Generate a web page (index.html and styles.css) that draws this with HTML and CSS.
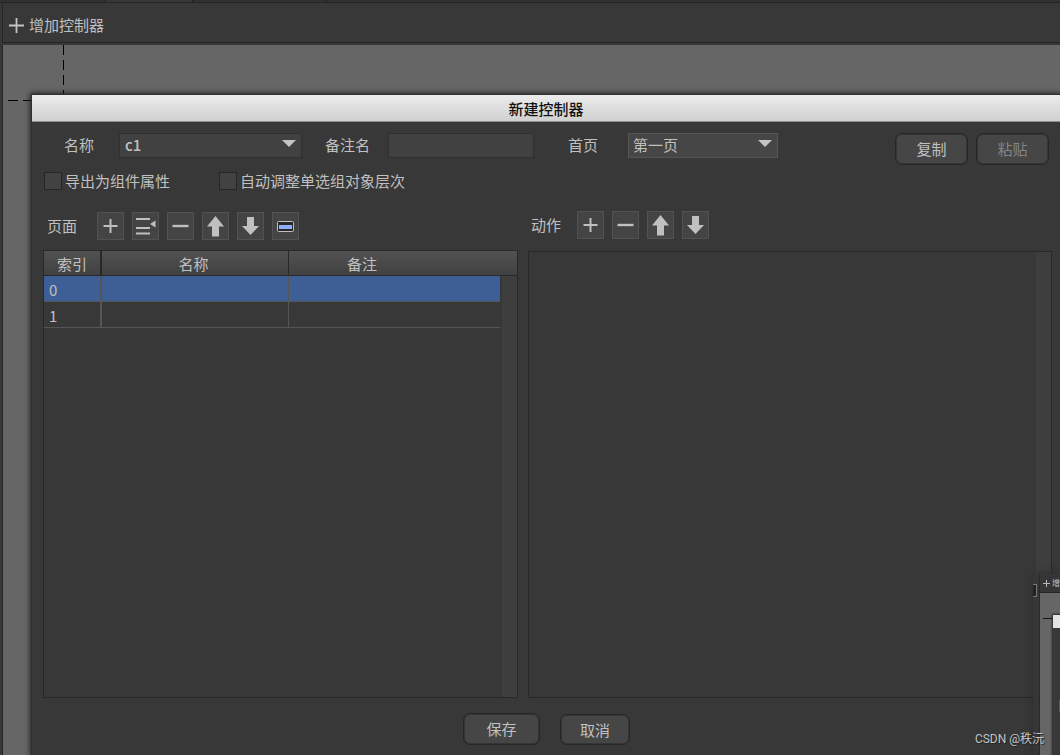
FILE: index.html
```html
<!DOCTYPE html>
<html lang="zh-CN">
<head>
<meta charset="utf-8">
<title>新建控制器</title>
<link rel="stylesheet" href="styles.css">
</head>
<body>
<div class="app">
  <div class="tabs"><span class="tab"></span><span class="tab tab-active"></span><span class="tab tab-wide"></span></div>
  <header class="toolbar">
    <button class="add-controller" type="button">
      <svg width="15" height="15" viewBox="0 0 15 15"><path d="M0 7.5h15M7.5 0v15" stroke="#c4c4c4" stroke-width="1.8"/></svg>
      <span>增加控制器</span>
    </button>
  </header>
  <main class="canvas">
    <svg class="guides" width="80" height="80" viewBox="0 0 80 80"><path d="M60.5 0v80" stroke="#000" stroke-dasharray="10 5"/><path d="M5 55.5h75" stroke="#000" stroke-dasharray="10 5"/></svg>
    <section class="dialog" role="dialog" aria-labelledby="dialog-title">
      <h1 class="title" id="dialog-title">新建控制器</h1>
      <form class="content">
        <div class="fields">
          <label class="label label-name" for="name">名称</label>
          <span class="picker picker-name"><select id="name"><option>c1</option></select></span>
          <label class="label label-note" for="note">备注名</label>
          <input class="note" id="note" type="text">
          <label class="label label-home" for="home">首页</label>
          <span class="picker picker-home"><select id="home"><option>第一页</option></select></span>
          <div class="clipboard">
            <button class="button" type="button">复制</button>
            <button class="button" type="button" disabled>粘贴</button>
          </div>
        </div>
        <div class="options">
          <label class="check"><input type="checkbox">导出为组件属性</label>
          <label class="check"><input type="checkbox">自动调整单选组对象层次</label>
        </div>
        <div class="columns">
          <section class="pages">
            <div class="tools">
              <h2 class="heading">页面</h2>
              <button class="tool" type="button" aria-label="添加页面"><svg viewBox="0 0 25 26"><path d="M5.500 13h14M12.500 6v14" stroke-width="2"/></svg></button>
              <button class="tool" type="button" aria-label="插入页面"><svg viewBox="0 0 25 26"><path d="M3 6h14M3 15h14M3 20.500h14" stroke-width="2"/><path class="solid" d="M17 11l5.500-3.500v7z"/></svg></button>
              <button class="tool" type="button" aria-label="删除页面"><svg viewBox="0 0 25 26"><path d="M4.500 13h16" stroke-width="2.400"/></svg></button>
              <button class="tool" type="button" aria-label="上移页面"><svg viewBox="0 0 25 26"><path class="solid" d="M12.500 3L21 13.500h-5V23.500H9V13.500H4z"/></svg></button>
              <button class="tool" type="button" aria-label="下移页面"><svg viewBox="0 0 25 26"><path class="solid" d="M9 4h7v9h5l-8.500 9L4 13h5z"/></svg></button>
              <button class="tool" type="button" aria-label="重置"><svg viewBox="0 0 25 26"><rect x="4.500" y="8.500" width="16" height="10" rx="1" fill="#282828"/><rect class="bar" x="6" y="12" width="13" height="4"/></svg></button>
            </div>
            <div class="pane">
              <table class="grid">
                <colgroup><col class="col-index"><col class="col-name"><col class="col-note"><col class="col-scroll"></colgroup>
                <thead><tr><th>索引</th><th class="name-head">名称</th><th class="note-head">备注</th><th class="plain"></th></tr></thead>
                <tbody>
                  <tr class="selected"><td>0</td><td></td><td></td><td class="plain"></td></tr>
                  <tr><td>1</td><td></td><td></td><td class="plain"></td></tr>
                </tbody>
              </table>
              <div class="remainder"></div>
            </div>
          </section>
          <section class="actions">
            <div class="tools">
              <h2 class="heading">动作</h2>
              <button class="tool" type="button" aria-label="添加动作"><svg viewBox="0 0 25 26"><path d="M5.500 13h14M12.500 6v14" stroke-width="2"/></svg></button>
              <button class="tool" type="button" aria-label="删除动作"><svg viewBox="0 0 25 26"><path d="M4.500 13h16" stroke-width="2.400"/></svg></button>
              <button class="tool" type="button" aria-label="上移动作"><svg viewBox="0 0 25 26"><path class="solid" d="M12.500 3L21 13.500h-5V23.500H9V13.500H4z"/></svg></button>
              <button class="tool" type="button" aria-label="下移动作"><svg viewBox="0 0 25 26"><path class="solid" d="M9 4h7v9h5l-8.500 9L4 13h5z"/></svg></button>
            </div>
            <div class="pane"><div class="remainder"></div></div>
          </section>
        </div>
        <footer class="footer">
          <button class="button save" type="button">保存</button>
          <button class="button cancel" type="button">取消</button>
        </footer>
      </form>
    </section>
  </main>
  <div class="preview">
    <div class="preview-edge"></div>
    <div class="preview-main">
      <div class="preview-bar"><svg width="7" height="7" viewBox="0 0 7 7"><path d="M0 3.500h7M3.500 0v7" stroke="#b8b8b8"/></svg><span>增加控制器</span></div>
      <div class="preview-canvas"><div class="preview-dialog"><div class="preview-title"></div><div class="preview-row"></div></div></div>
    </div>
  </div>
  <p class="credit">CSDN @秩沅</p>
</div>
</body>
</html>
```
FILE: styles.css
```css
* { box-sizing: border-box; }

body {
  margin: 0;
  background: #383838;
  color: #c0c0c0;
  font: 15px/22px "Noto Sans CJK SC", "Noto Sans", sans-serif;
}

button, input, select { font: inherit; color: inherit; margin: 0; }

.app {
  position: relative;
  display: flex;
  flex-direction: column;
  min-height: 100vh;
  overflow: hidden;
}

.tabs { display: flex; height: 3px; background: #303030; border-bottom: 1px solid #252525; }
.tab { width: 106px; border-right: 1px solid #222; }
.tab-active { width: 87px; background: #383838; }
.tab-wide { width: 134px; }

.toolbar {
  display: flex;
  align-items: center;
  height: 40px;
  margin-left: 2px;
  padding: 5px 6px 0;
  border-left: 1px solid #252525;
  border-bottom: 1px solid #252525;
}

.add-controller {
  display: flex;
  align-items: center;
  gap: 5px;
  padding: 0;
  border: 0;
  background: none;
}
.add-controller svg { display: block; }

.canvas {
  position: relative;
  display: flex;
  flex: 1;
  margin: 2px 0 0 2px;
  padding: 50px 0 0 29px;
  border-left: 1px solid #252525;
  background: #666;
}
.guides { position: absolute; top: 0; left: 0; }

.dialog {
  position: relative;
  display: flex;
  flex: 1;
  flex-direction: column;
  background: #383838;
  box-shadow: 0 0 0 1px #303030, 0 0 5px 2px #222;
}

.title {
  height: 27px;
  margin: 0;
  border-bottom: 1px solid #8d918f;
  background: linear-gradient(#ececec, #d0d0d0);
  color: #111;
  font-size: 15px;
  font-weight: 500;
  line-height: 27px;
  text-align: center;
}

.content {
  display: flex;
  flex: 1;
  flex-direction: column;
  padding: 11px 8px 10px 11px;
}

.fields { display: flex; align-items: flex-start; height: 32px; }
.label { line-height: 24px; }
.label-name { margin-left: 21px; }
.label-note { margin-left: 23px; }
.label-home { margin-left: 34px; }

.picker { position: relative; height: 25px; background: #414141; }
.picker::after {
  content: "";
  position: absolute;
  top: 7px;
  right: 6px;
  border: 7px solid transparent;
  border-top-color: #c4c4c4;
  border-bottom-width: 0;
  pointer-events: none;
}
.picker select {
  appearance: none;
  display: block;
  width: 100%;
  height: 100%;
  padding: 0 5px 2px;
  border: 1px solid #303030;
  border-radius: 0;
  background: none;
}
.picker-name { width: 183px; margin-left: 25px; }
.picker-name select { font-weight: 500; }
.picker-home { width: 150px; margin-left: 30px; background: #464646; }
.picker-home select { padding-left: 4px; border-color: #555; }

.note {
  width: 146px;
  height: 25px;
  margin-left: 18px;
  padding: 0 5px;
  border: 1px solid #303030;
  background: #414141;
}

.clipboard { display: flex; gap: 8px; margin: 0 3px 0 auto; }

.button {
  width: 73px;
  height: 32px;
  padding: 0;
  border: 1px solid #262626;
  border-radius: 7px;
  background: #464646;
  box-shadow: inset 0 0 0 1px #353535;
}
.button:disabled { color: #848484; }

.options { display: flex; gap: 49px; padding: 6px 1px 0; }
.check { display: flex; align-items: center; gap: 3px; line-height: 20px; }
.check input {
  appearance: none;
  width: 18px;
  height: 18px;
  border: 1px solid #262626;
  background: #424242;
}

.columns { display: flex; flex: 1; gap: 10px; margin-top: 20px; }
.pages, .actions { display: flex; flex-direction: column; }
.pages { flex: 475 1 0; }
.actions { flex: 524 1 0; }

.tools { display: flex; align-items: center; gap: 8px; height: 29px; margin-bottom: 10px; }
.pages .tools { padding: 1px 0 0 4px; }
.actions .tools { padding-left: 3px; height: 27px; margin-bottom: 13px; }
.heading { width: 42px; margin: 0; font-size: 15px; font-weight: 400; }
.actions .heading { width: 38px; }
.tool {
  width: 27px;
  height: 28px;
  padding: 0;
  border: 1px solid #525252;
  background: #444;
}
.tool svg { display: block; width: 25px; height: 26px; fill: none; stroke: #c0c0c0; }
.tool .solid { fill: #c0c0c0; stroke: none; }
.tool .bar { fill: #8aafff; stroke: none; }

.pane { display: flex; flex: 1; flex-direction: column; border: 1px solid #282828; }
.remainder { flex: 1; width: 15px; margin-left: auto; background: #3e3e3e; }

.grid { width: 100%; table-layout: fixed; border-collapse: separate; border-spacing: 0; }
.col-index { width: 58px; }
.col-name { width: 187px; }
.col-scroll { width: 17px; }
.grid th {
  height: 25px;
  padding: 2px 0 0;
  border-right: 1px solid #282828;
  border-bottom: 1px solid #282828;
  background: linear-gradient(#525252, #414141);
  font-weight: 400;
  line-height: 22px;
}
.grid th:first-child { border-right-width: 2px; }
.grid .name-head { padding-right: 3px; }
.grid .note-head { padding-right: 65px; border-right: 0; }
.grid td {
  height: 26px;
  padding: 3px 5px 0;
  border-right: 1px solid #555;
  border-bottom: 1px solid #555;
  line-height: 22px;
}
.grid td:first-child { border-right-width: 2px; }
.grid td:nth-child(3) { border-right: 0; }
.grid .selected td { background: #3e5f96; }
.grid th.plain { border-right: 0; }
.grid td.plain, .grid .selected td.plain { border: 0 solid #383838; border-left-width: 2px; background: #3e3e3e; }

.footer { display: flex; gap: 20px; margin-top: 15px; padding-left: 420px; }
.save { width: 77px; }
.cancel { width: 70px; margin-top: 1px; height: 31px; }

.preview {
  position: absolute;
  right: 0;
  bottom: 0;
  display: flex;
  width: 27px;
  height: 181px;
  overflow: hidden;
  border-top-left-radius: 5px;
  background: #363636;
  box-shadow: 0 0 8px #2b2b2b;
}
.preview-edge { flex: none; width: 4px; height: 13px; margin: 10px 2px 0 0; border: 1px solid #777; border-left: 0; background: #222; }
.preview-main { display: flex; flex: 1; flex-direction: column; min-width: 0; border-left: 1px solid #292929; }
.preview-bar { display: flex; flex: none; align-items: center; gap: 2px; height: 19px; padding-left: 3px; border-bottom: 1px solid #252525; font-size: 8px; white-space: nowrap; }
.preview-bar svg { flex: none; }
.preview-canvas { flex: 1; padding: 22px 0 0 13px; background: linear-gradient(#111, #111) 3px 25px / 9px 1px no-repeat #666; }
.preview-dialog { height: 100%; background: #383838; box-shadow: 0 0 2px 1px #222; }
.preview-title { height: 13px; background: #e2e2e2; }
.preview-row { width: 1px; height: 12px; margin: 72px 0 0 auto; background: #3e5f96; }

.credit {
  position: absolute;
  right: 16px;
  bottom: 5px;
  margin: 0;
  color: #c4c4c4;
  font: 12px/22px Roboto, "Noto Sans CJK SC", sans-serif;
  text-shadow: 1px 1px 1px #222;
}
```
